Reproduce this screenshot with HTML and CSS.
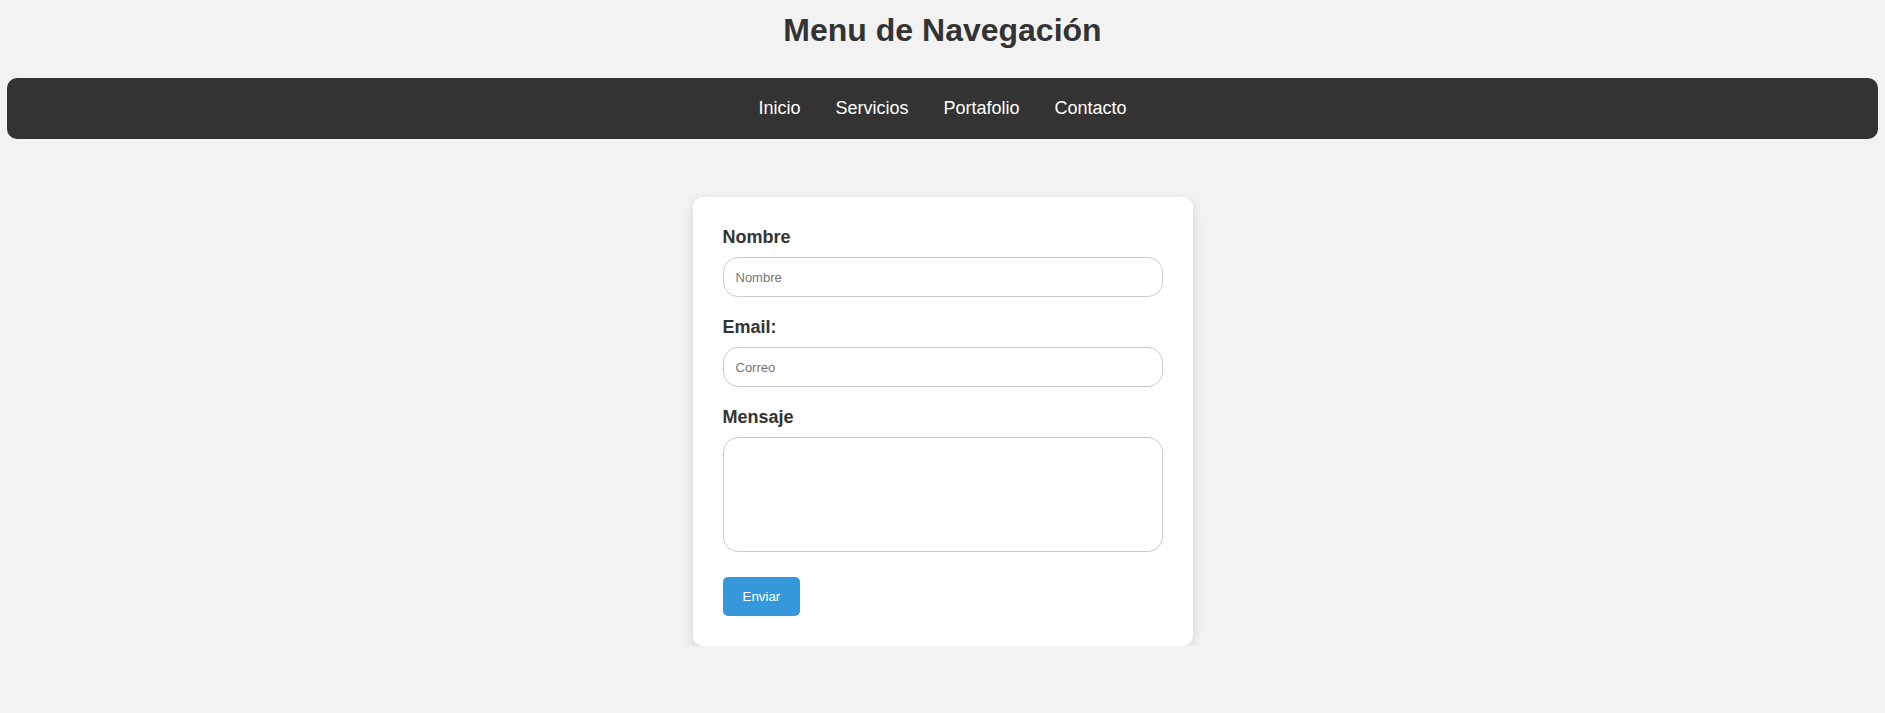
FILE: index.html
```html
<!DOCTYPE html>
<html lang="es">
<head>
<meta charset="utf-8">
<title>Menu de Navegación</title>
<link rel="stylesheet" href="styles.css">
</head>
<body>
<header class="header">
  <h1 class="title">Menu de Navegación</h1>
</header>
<nav class="nav">
  <a class="nav-link" href="#">Inicio</a>
  <a class="nav-link" href="#">Servicios</a>
  <a class="nav-link" href="#">Portafolio</a>
  <a class="nav-link" href="#">Contacto</a>
</nav>
<main class="main">
  <form class="card">
    <label class="label" for="nombre">Nombre</label>
    <input class="field" id="nombre" type="text" placeholder="Nombre">
    <label class="label" for="email">Email:</label>
    <input class="field" id="email" type="email" placeholder="Correo">
    <label class="label" for="mensaje">Mensaje</label>
    <textarea class="field area" id="mensaje"></textarea>
    <button class="btn" type="button">Enviar</button>
  </form>
</main>
</body>
</html>
```
FILE: styles.css
```css
* { box-sizing: border-box; }
html, body { margin: 0; padding: 0; }
body {
  background: #f2f2f2;
  font-family: "Liberation Sans", Arial, sans-serif;
  color: #333;
}
.header {
  padding-top: 12px;
  height: 78px;
}
.title {
  margin: 0;
  text-align: center;
  font-size: 32px;
  font-weight: bold;
  line-height: 36px;
  color: #333;
}
.nav {
  margin: 0 7px;
  height: 61px;
  background: #333;
  border-radius: 10px;
  display: flex;
  justify-content: center;
  align-items: center;
  gap: 35px;
}
.nav-link {
  color: #fff;
  text-decoration: none;
  font-size: 18px;
  line-height: 21px;
}
.main {
  display: flex;
  justify-content: center;
  padding-top: 58px;
}
.card {
  width: 500px;
  background: #fff;
  border-radius: 10px;
  padding: 30px;
  box-shadow: 0 4px 12px rgba(0, 0, 0, 0.12);
  display: flex;
  flex-direction: column;
  align-items: flex-start;
}
.label {
  display: block;
  font-size: 18px;
  font-weight: bold;
  line-height: 21px;
  color: #333;
  margin-bottom: 9px;
}
.field {
  display: block;
  width: 100%;
  height: 40px;
  margin: 0 0 20px;
  padding: 0 12px;
  border: 1px solid #ccc;
  border-radius: 15px;
  font-family: "Liberation Sans", Arial, sans-serif;
  font-size: 13px;
  color: #333;
  background: #fff;
  outline: none;
}
.field::placeholder { color: #757575; }
.area {
  height: 115px;
  margin-bottom: 25px;
  padding: 12px;
  resize: none;
}
.btn {
  height: 39px;
  padding: 0 20px;
  border: none;
  border-radius: 5px;
  background: #3498db;
  color: #fff;
  font-family: "Liberation Sans", Arial, sans-serif;
  font-size: 13.33px;
  cursor: pointer;
}
```
